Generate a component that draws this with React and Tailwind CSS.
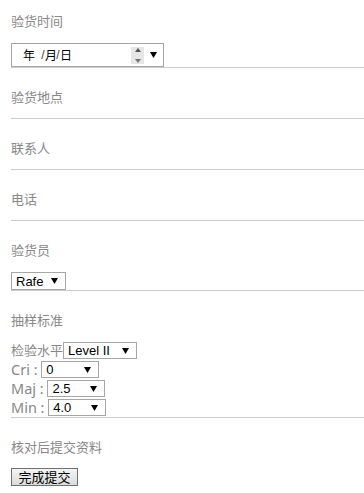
import React from "react";

const cjk = "font-['Noto_Sans','Noto_Sans_CJK_SC',sans-serif]";

const Arrow = () => (
  <svg width="7" height="6" viewBox="0 0 7 6" className="shrink-0">
    <polygon points="0,0 7,0 3.5,6" fill="#000" />
  </svg>
);

// fake native select: text on the left, black triangle on the right
const Pick = ({ value, className }) => (
  <span
    className={`inline-flex items-center justify-between border border-[#a6a6a6] bg-white pl-[4px] pr-[7px] text-[13px] leading-none text-black font-['Liberation_Sans',sans-serif] ${className}`}
  >
    <span>{value}</span>
    <Arrow />
  </span>
);

const Label = ({ children }) => (
  <div className={`h-[20px] text-[13px] leading-[20px] text-[#888] ${cjk}`}>{children}</div>
);

const DateBox = () => (
  <div className="mt-[12px] flex h-[24px] w-[153px] items-center border border-[#a6a6a6] bg-white pl-[11px] pr-[6px] text-[12px] text-black font-['Noto_Sans_CJK_SC',sans-serif]">
    <span className="inline-block w-[18px]">年</span>
    <span className="inline-block w-[4px] text-center text-[#444] font-['Liberation_Sans',sans-serif]">/</span>
    <span className="inline-block w-[11px]">月</span>
    <span className="inline-block w-[4px] text-center text-[#444] font-['Liberation_Sans',sans-serif]">/</span>
    <span className="inline-block">日</span>
    <span className="ml-auto flex h-[17px] w-[13px] flex-col items-center justify-between bg-[#e6e6e6] py-[1px]">
      <svg width="6" height="4" viewBox="0 0 6 4">
        <polygon points="0,4 6,4 3,0" fill="#555" />
      </svg>
      <svg width="6" height="4" viewBox="0 0 6 4">
        <polygon points="0,0 6,0 3,4" fill="#777" />
      </svg>
    </span>
    <span className="ml-[6px] flex">
      <Arrow />
    </span>
  </div>
);

const Row = ({ label, children }) => (
  <div className="flex h-[19px] items-center">
    {label}
    {children}
  </div>
);

const small = "text-[14.5px] leading-none text-[#888] font-['Noto_Sans',sans-serif] whitespace-pre";

export default function App() {
  return (
    <div className="min-h-[493px] bg-white pl-[11px]">
      <section className="border-b border-[#cccccc] pt-[11px]">
        <Label>验货时间</Label>
        <DateBox />
      </section>

      <section className="border-b border-[#cccccc] pt-[19px] pb-[11px]">
        <Label>验货地点</Label>
      </section>

      <section className="border-b border-[#cccccc] pt-[19px] pb-[11px]">
        <Label>联系人</Label>
      </section>

      <section className="border-b border-[#cccccc] pt-[19px] pb-[11px]">
        <Label>电话</Label>
      </section>

      <section className="border-b border-[#cccccc] pt-[19px]">
        <Label>验货员</Label>
        <div className="mt-[12px] flex">
          <Pick value="Rafe" className="h-[18px] w-[55px]" />
        </div>
      </section>

      <section className="border-b border-[#cccccc] pt-[19px]">
        <Label>抽样标准</Label>
        <div className="mt-[11px] flex flex-col">
          <Row label={<span className={`text-[13px] text-[#888] ${cjk}`}>检验水平</span>}>
            <Pick value="Level II" className="h-[17px] w-[74px]" />
          </Row>
          <Row label={<span className={small}>{"Cri : "}</span>}>
            <Pick value="0" className="h-[17px] w-[58px]" />
          </Row>
          <Row label={<span className={small}>{"Maj : "}</span>}>
            <Pick value="2.5" className="h-[17px] w-[58px]" />
          </Row>
          <Row label={<span className={small}>{"Min : "}</span>}>
            <Pick value="4.0" className="h-[17px] w-[58px]" />
          </Row>
        </div>
      </section>

      <section className="pt-[19px]">
        <Label>核对后提交资料</Label>
        <button
          type="button"
          className={`mt-[11px] flex h-[18px] w-[67px] items-center justify-center border border-[#707070] bg-gradient-to-b from-[#f4f4f4] to-[#dcdcdc] text-[13px] leading-none text-black ${cjk}`}
        >
          完成提交
        </button>
      </section>
    </div>
  );
}
